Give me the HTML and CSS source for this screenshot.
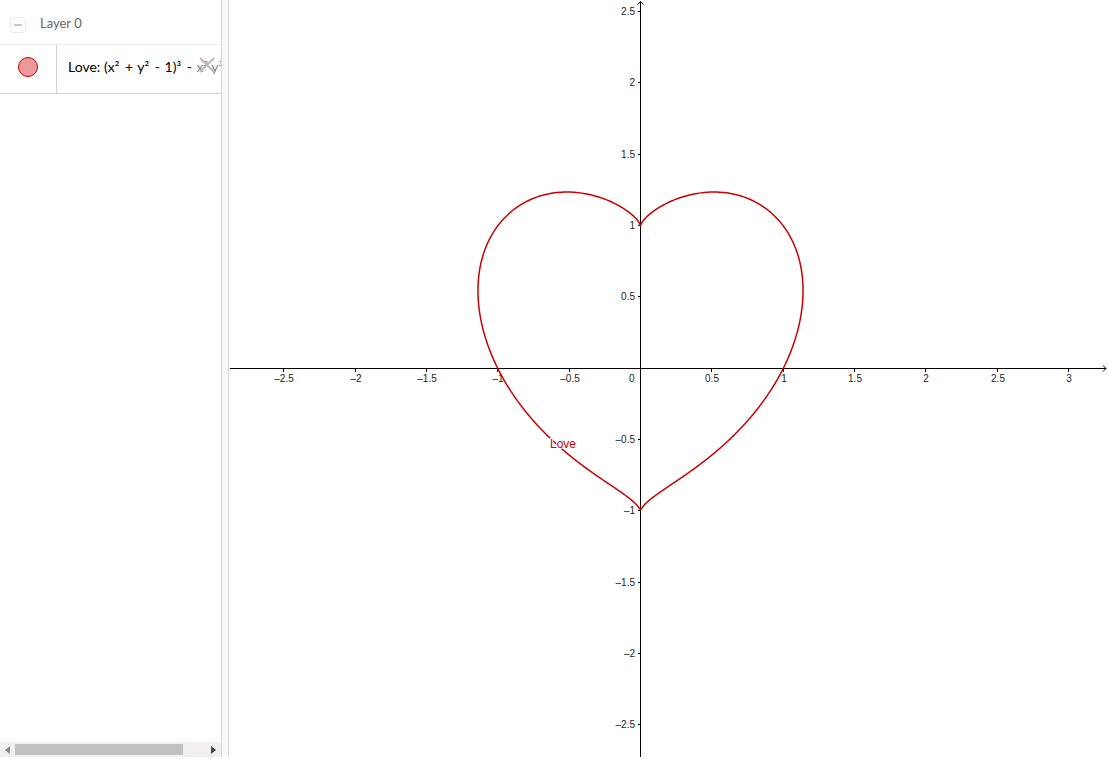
FILE: index.html
```html
<!DOCTYPE html>
<html lang="en">
<head>
<meta charset="utf-8">
<title>Love</title>
<link rel="stylesheet" href="styles.css">
</head>
<body>
<aside class="algebra">
  <header class="layer">
    <button class="collapse" aria-label="Collapse layer"></button>
    <span class="layer-name">Layer 0</span>
  </header>
  <div class="entry">
    <div class="marble-cell"><button class="marble" aria-label="Show or hide Love"></button></div>
    <div class="formula">Love: (x² <span class="op">+</span> y² <span class="op">-</span> 1)³ <span class="op">-</span> x² y³</div>
    <button class="remove" aria-label="Delete">
      <svg width="16" height="16" viewBox="0 0 16 16"><path d="M1 1L15 15M15 1L1 15"/></svg>
    </button>
  </div>
  <div class="spacer"></div>
  <div class="scrollbar">
    <button class="arrow arrow-left" aria-label="Scroll left"><svg width="5" height="8" viewBox="0 0 5 8"><path d="M5 0V8L0 4Z"/></svg></button>
    <div class="track"><div class="thumb"></div></div>
    <button class="arrow" aria-label="Scroll right"><svg width="5" height="8" viewBox="0 0 5 8"><path d="M0 0V8L5 4Z"/></svg></button>
  </div>
</aside>
<div class="splitter"></div>
<main class="graphics"><svg class="plot" id="plot" role="img" aria-label="Graph of Love"></svg></main>
<script src="plot.js"></script>
</body>
</html>
```

FILE: styles.css
```css
* { box-sizing: border-box; }
body {
  display: flex;
  height: 100vh;
  margin: 0;
  padding-bottom: 2px;
  overflow: hidden;
  background: #fff;
  font-family: Lato, "Open Sans", sans-serif;
}
button { padding: 0; border: 0; background: none; }
.algebra {
  display: flex;
  flex-direction: column;
  width: 20%;
  max-width: 221px;
  flex: none;
}
.layer {
  display: flex;
  align-items: center;
  gap: 14px;
  height: 45px;
  padding: 4px 10px 0;
  border-bottom: 1px solid #eee;
}
.collapse {
  display: grid;
  place-items: center;
  width: 16px;
  height: 16px;
  margin-top: 1px;
  border: 1px solid #ebebeb;
  border-radius: 3px;
}
.collapse::before {
  content: "";
  width: 8px;
  height: 2px;
  background: #c8c8c8;
}
.layer-name {
  padding-bottom: 3px;
  color: #666;
  font-size: 13px;
  line-height: 16px;
}
.entry {
  position: relative;
  display: flex;
  height: 49px;
  border-bottom: 1px solid #d3d3d3;
  overflow: hidden;
}
.marble-cell {
  display: grid;
  place-items: center;
  flex: none;
  width: 57px;
  padding-bottom: 4px;
  border-right: 1px solid #d3d3d3;
}
.marble {
  width: 20px;
  height: 20px;
  border: 1px solid #c00;
  border-radius: 50%;
  background: #eb999b;
}
.formula {
  padding: 12px 0 0 11px;
  font-size: 14px;
  line-height: 20px;
  white-space: nowrap;
}
.op { margin: 0 1px 0 2px; }
.remove {
  position: absolute;
  top: 0;
  right: 0;
  width: 26px;
  height: 48px;
  background: rgba(255, 255, 255, .5);
}
.remove svg {
  display: block;
  margin: -8px 0 0 4px;
  fill: none;
  stroke: #bbb;
  stroke-width: 2;
}
.spacer { flex: 1; }
.scrollbar {
  display: flex;
  height: 15px;
  background: #f1eff0;
}
.arrow {
  display: grid;
  place-items: center;
  width: 15px;
  fill: #444;
}
.arrow-left { fill: #888; }
.track { flex: 1; padding: 2px 0; }
.thumb { width: 88%; height: 11px; background: #c1c1c1; }
.splitter {
  flex: none;
  width: 8px;
  border: solid #d9d9d9;
  border-width: 0 1px;
  background: #f8f8f8;
}
.graphics { flex: 1; min-width: 0; }
.plot { display: block; width: 100%; height: 100%; }
.axis { fill: none; stroke: #000; shape-rendering: crispEdges; }
.tip { fill: none; stroke: #000; }
.tick-label {
  fill: #1c1c1c;
  font: 10px "Liberation Sans", Arial, sans-serif;
  text-anchor: middle;
}
.tick-label-y { text-anchor: end; }
.curve { fill: none; stroke: #c00; stroke-width: 1.5; stroke-linejoin: round; }
.curve-label {
  fill: #c00;
  stroke: #fff;
  stroke-width: 2;
  paint-order: stroke;
  font: 12px "Liberation Sans", Arial, sans-serif;
}
```

FILE: plot.js
```js
const plot = document.getElementById('plot');
const UNIT = 142.7;

function add(tag, attrs, text) {
  const el = document.createElementNS('http://www.w3.org/2000/svg', tag);
  for (const key in attrs) el.setAttribute(key, attrs[key]);
  if (text) el.textContent = text;
  plot.appendChild(el);
}

// Positive root of r^2 - 1 = k r^(5/3), the heart curve in polar form.
function radius(angle) {
  const k = Math.cbrt(Math.cos(angle) ** 2) * Math.sin(angle);
  let low = 0, high = 3;
  for (let i = 0; i < 40; i++) {
    const r = (low + high) / 2;
    if (r * r - 1 - k * Math.pow(r, 5 / 3) > 0) high = r; else low = r;
  }
  return low;
}

function draw() {
  plot.replaceChildren();
  const width = plot.clientWidth, height = plot.clientHeight;
  const ox = Math.round(width * 0.467) + 0.5;
  const oy = Math.round(height * 0.486) + 0.5;
  const name = n => String(n).replace('-', '–');

  let axes = `M1 ${oy}H${width - 3}M${ox} 2V${height}`;
  for (let n = Math.ceil(-ox / UNIT * 2) / 2; ox + n * UNIT < width - 10; n += 0.5) {
    const x = Math.floor(ox + n * UNIT) + 0.5;
    if (n === 0 || x < 20) continue;
    axes += `M${x} ${oy}v3`;
    add('text', { x: x + 0.5, y: oy + 13.5, class: 'tick-label' }, name(n));
  }
  for (let n = -2.5; n <= 2.5; n += 0.5) {
    if (n === 0) continue;
    const y = Math.floor(oy - 0.3 - n * UNIT) + 0.5;
    axes += `M${ox} ${y}h-3`;
    add('text', { x: ox - 5.5, y: y + 3.5, class: 'tick-label tick-label-y' }, name(n));
  }
  add('text', { x: ox - 6, y: oy + 13.5, class: 'tick-label tick-label-y' }, '0');
  add('path', { d: axes, class: 'axis' });
  add('path', { d: `M${width - 6} ${oy - 3}l3 3l-3 3M${ox - 3} 4.5l3 -3l3 3`, class: 'tip' });

  const points = [];
  for (let i = 0; i <= 720; i++) {
    const a = i * Math.PI / 360, r = radius(a) * UNIT;
    const x = ox + r * Math.cos(a);
    const y = Math.min(Math.max(oy - r * Math.sin(a), -height), oy + UNIT - 1.5);
    points.push(x.toFixed(2) + ' ' + y.toFixed(2));
  }
  add('path', { d: 'M' + points.join('L') + 'Z', class: 'curve' });
  add('text', { x: ox - 90.5, y: oy + 79.5, class: 'curve-label' }, 'Love');
}

draw();
window.addEventListener('resize', draw);
```
